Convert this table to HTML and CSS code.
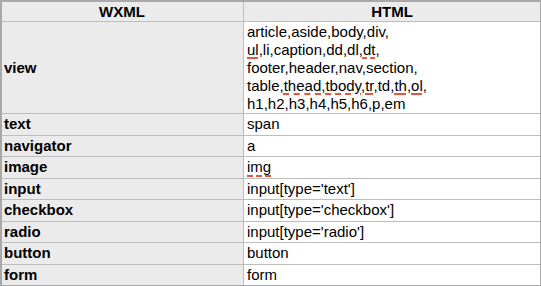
FILE: index.html
```html
<!DOCTYPE html>
<html lang="en">
<head>
  <meta charset="UTF-8">
  <title>WXML / HTML</title>
  <link rel="stylesheet" href="styles.css">
</head>
<body>
  <div class="sheet">
    <div class="cell head name"><div>WXML</div></div>
    <div class="cell head tags"><div>HTML</div></div>

    <div class="cell name"><div>view</div></div>
    <div class="cell tags"><div>article,aside,body,div,<br><span class="typo">ul</span>,li,caption,dd,dl,<span class="typo">dt</span>,<br>footer,header,nav,section,<br>table,<span class="typo">thead</span>,<span class="typo">tbody</span>,<span class="typo">tr</span>,td,<span class="typo">th</span>,<span class="typo">ol</span>,<br>h1,h2,h3,h4,h5,h6,p,em</div></div>

    <div class="cell name"><div>text</div></div>
    <div class="cell tags"><div>span</div></div>
    <div class="cell name"><div>navigator</div></div>
    <div class="cell tags"><div>a</div></div>
    <div class="cell name"><div>image</div></div>
    <div class="cell tags"><div><span class="typo">img</span></div></div>
    <div class="cell name"><div>input</div></div>
    <div class="cell tags"><div>input[type='text']</div></div>
    <div class="cell name"><div>checkbox</div></div>
    <div class="cell tags"><div>input[type='checkbox']</div></div>
    <div class="cell name"><div>radio</div></div>
    <div class="cell tags"><div>input[type='radio']</div></div>
    <div class="cell name"><div>button</div></div>
    <div class="cell tags"><div>button</div></div>
    <div class="cell name last"><div>form</div></div>
    <div class="cell tags last"><div>form</div></div>
  </div>
</body>
</html>
```

FILE: styles.css
```css
body {
  margin: 0;
  font-family: "Liberation Sans", Arial, sans-serif;
  font-size: 15px;
  color: #000000;
  background-color: #ffffff;
}

/* grille type tableur : 2 colonnes, une ligne haute pour "view" */
.sheet {
  width: 541px;
  height: 286px;
  box-sizing: border-box;
  border: 2px solid #a9a9a9;
  border-right-width: 1px;
  border-bottom-width: 1px;
  display: grid;
  grid-template-columns: 242px minmax(0, 1fr);
  grid-template-rows: 20px 92px repeat(7, 21.5px) 20.5px;
}

.cell {
  box-sizing: border-box;
  display: flex;
  align-items: center;
  padding: 0 3px;
  line-height: 18px;
  border-bottom: 1px solid #bdbdbd;
  white-space: nowrap;
  min-width: 0;
}

.cell.last {
  border-bottom: none;
}

.name {
  background-color: #ebebeb;
  font-weight: bold;
  border-right: 1px solid #bdbdbd;
  padding-left: 2px;
}

.tags {
  background-color: #ffffff;
}

.head {
  background-color: #ebebeb;
  font-weight: bold;
  justify-content: center;
}

.typo {
  text-decoration: underline dashed #e8553e;
  text-decoration-thickness: 1.5px;
  text-underline-offset: 3px;
}
```
